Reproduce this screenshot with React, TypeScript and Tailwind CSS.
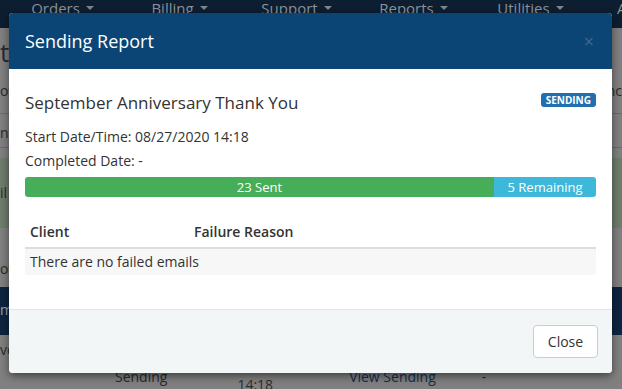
import React from "react";

const navItems = ["Orders", "Billing", "Support", "Reports", "Utilities"];

function Caret() {
  return <span className="ml-1.5 inline-block border-x-[4px] border-t-[4px] border-x-transparent border-t-[#7d858e] align-middle" />;
}

export default function App() {
  const sent = 23;
  const remaining = 5;
  const pct = (sent / (sent + remaining)) * 100;

  return (
    <div className="relative h-[389px] w-[622px] overflow-hidden bg-[#808080] font-['Open_Sans',sans-serif]">
      {/* dimmed page behind the dialog */}
      <div className="flex h-[28px] items-start bg-[#0d1e31] text-[15px] leading-[16px] text-[#8b939c]">
        {navItems.map((n) => (
          <div key={n} className="flex w-[117px] shrink-0 items-center justify-center pl-2">
            {n}
            <Caret />
          </div>
        ))}
        <div className="pl-[32px]">A</div>
      </div>
      <div className="mt-1 text-[26px] leading-[40px] text-[#2a2a2a]">tn</div>
      <div className="mt-2 border-b border-[#6c6c6c] pb-3 text-[14px] text-[#2a2a2a]">
        <div className="flex justify-between">
          <span>ow</span>
          <span>nc</span>
        </div>
      </div>
      <div className="h-[34px] border-b border-[#6c6c6c] py-2 text-[14px] text-[#2a2a2a]">np</div>
      <div className="mt-[10px] h-[70px] bg-[#6f7d6d] py-6 text-[14px] text-[#2a2a2a]">il</div>
      <div className="mt-[30px] text-[14px] text-[#2a2a2a]">ow</div>
      <div className="mt-[8px] h-[48px] bg-[#0d2540] py-3 text-[14px] text-[#9aa3ad]">m</div>
      <div className="pt-1 text-[14px] text-[#2a2a2a]">ve</div>
      <div className="relative mt-[6px] flex text-[14px] text-[#2a2a2a]">
        <span className="ml-[115px]">Sending</span>
        <span className="ml-[70px] mt-2">14:18</span>
        <span className="ml-[76px] text-[#152d4d]">View Sending</span>
        <span className="ml-[46px]">-</span>
      </div>

      {/* dialog */}
      <div className="absolute left-[9px] top-[13px] flex w-[603px] flex-col overflow-hidden rounded-[4px] bg-white shadow-[0_3px_9px_rgba(0,0,0,0.5)]">
        <div className="flex h-[56px] items-center justify-between bg-[#0b4576] px-4">
          <h3 className="text-[18px] text-white">Sending Report</h3>
          <span className="mr-[2px] text-[18px] leading-none text-[#3d6a92]">×</span>
        </div>

        <div className="px-4 pb-[34px] pt-[22px] text-[14px] text-[#333]">
          <div className="flex items-start justify-between">
            <h4 className="text-[17px] leading-[24px]">September Anniversary Thank You</h4>
            <span className="mt-[2px] rounded-[3px] bg-[#1f6fb1] px-[5px] text-[10px] font-bold leading-[14px] text-white">SENDING</span>
          </div>
          <p className="mt-3 leading-[20px]">Start Date/Time: 08/27/2020 14:18</p>
          <p className="mt-1 leading-[20px]">Completed Date: -</p>
          <div className="mt-[6px] flex h-[20px] overflow-hidden rounded-[3px] text-[13px] leading-[20px] text-white">
            <div className="bg-[#46ae58] text-center" style={{ width: `${pct}%` }}>{sent} Sent</div>
            <div className="flex-1 bg-[#3db8da] text-center">{remaining} Remaining</div>
          </div>

          <table className="mt-[18px] w-full text-left">
            <thead>
              <tr className="border-b-2 border-[#ddd]">
                <th className="w-[164px] px-[5px] pb-[5px] pt-[6px] font-semibold">Client</th>
                <th className="px-[5px] pb-[5px] pt-[6px] font-semibold">Failure Reason</th>
              </tr>
            </thead>
            <tbody>
              <tr className="bg-[#f7f7f7]">
                <td colSpan={2} className="px-[5px] py-[3px] leading-[20px]">There are no failed emails</td>
              </tr>
            </tbody>
          </table>
        </div>

        <div className="flex h-[64px] items-center justify-end border-t border-[#e3e6e8] bg-[#f3f6f7] px-[14px]">
          <button className="h-[33px] w-[65px] rounded-[4px] border border-[#ccc] bg-white text-[14px] text-[#333]">Close</button>
        </div>
      </div>
    </div>
  );
}
